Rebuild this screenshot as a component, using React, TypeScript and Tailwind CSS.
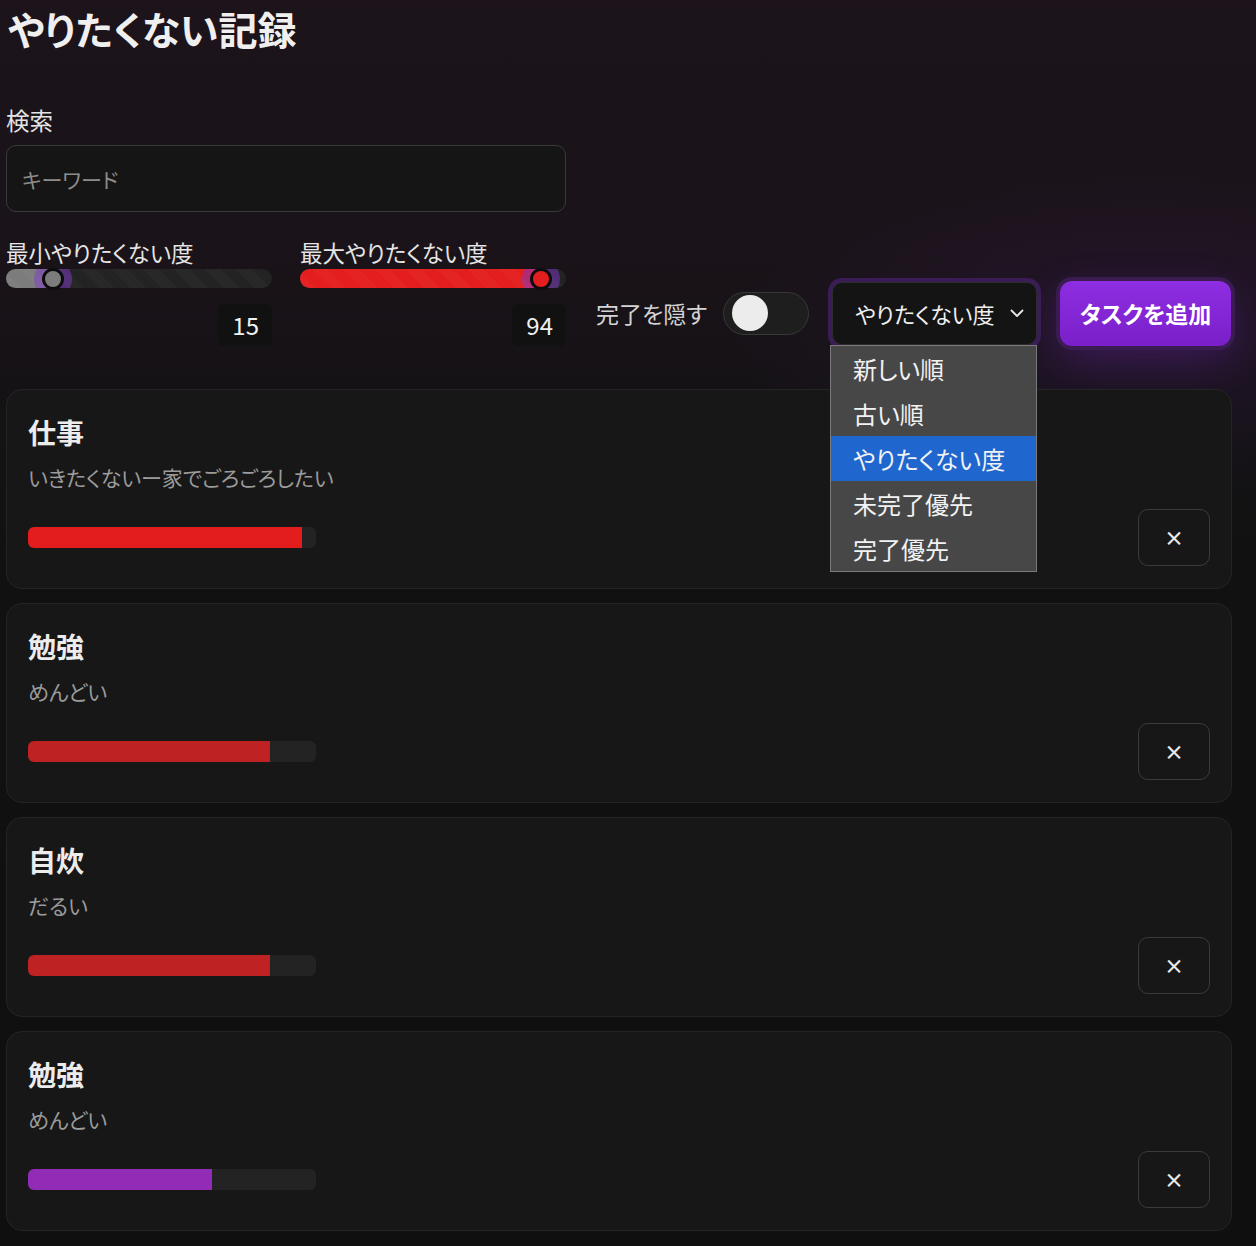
import React from "react";

type Task = { title: string; desc: string; value: number; color: string };

const tasks: Task[] = [
  { title: "仕事", desc: "いきたくないー家でごろごろしたい", value: 95, color: "#e31d1d" },
  { title: "勉強", desc: "めんどい", value: 84, color: "#bf2222" },
  { title: "自炊", desc: "だるい", value: 84, color: "#bf2222" },
  { title: "勉強", desc: "めんどい", value: 64, color: "#922bb5" },
];

function Slider({ label, value, fill }: { label: string; value: number; fill: string }) {
  const pos = 10 + (246 * value) / 100;
  return (
    <div className="flex w-[266px] flex-col">
      <div className="text-[22.5px] leading-[33px] text-[#e4e4e4]">{label}</div>
      <div className="relative h-[19px] w-full">
        <div className="absolute inset-0 overflow-hidden rounded-full bg-[#232323]">
          <div className="absolute inset-y-0 left-0" style={{ width: pos, background: fill }} />
          <div
            className="absolute top-1/2 h-[38px] w-[38px] -translate-x-1/2 -translate-y-1/2 rounded-full bg-[rgba(125,55,200,0.5)]"
            style={{ left: pos }}
          />
          <div className="absolute inset-0 [background-image:repeating-linear-gradient(45deg,rgba(255,255,255,0.025)_0px,rgba(255,255,255,0.025)_11px,transparent_11px,transparent_22px)]" />
        </div>
        <div
          className="absolute top-1/2 h-[22px] w-[22px] -translate-x-1/2 -translate-y-1/2 rounded-full border-[3px] border-[#0c0c0c]"
          style={{ left: pos, background: fill }}
        />
      </div>
      <div className="mt-[16px] h-[42px] w-[54px] self-end rounded-[6px] bg-[#111111] pr-[13px] text-right text-[24px] leading-[42px] text-[#f0f0f0]">
        {value}
      </div>
    </div>
  );
}

function TaskCard({ t }: { t: Task }) {
  return (
    <div className="flex h-[200px] flex-col rounded-[16px] border border-[#242424] bg-[#171717] pl-[21px] pr-[20px] pt-[21px]">
      <div className="text-[28px] font-bold leading-[42px] text-[#ececec]">{t.title}</div>
      <div className="mt-[8px] text-[21px] leading-[33px] text-[#9b9b9b]">{t.desc}</div>
      <div className="mt-[15px] flex items-center justify-between">
        <div className="h-[21px] w-[288px] overflow-hidden rounded-[6px] bg-[#232323]">
          <div className="h-full" style={{ width: `${t.value}%`, background: t.color }} />
        </div>
        <button className="mr-[1px] flex h-[57px] w-[72px] items-center justify-center rounded-[10px] border border-[#3b3b3b] bg-transparent text-[20px] font-bold text-[#e8e8e8]">
          ×
        </button>
      </div>
    </div>
  );
}

export default function App() {
  const options = ["新しい順", "古い順", "やりたくない度", "未完了優先", "完了優先"];
  return (
    <div className="min-h-screen w-full bg-[#101010] font-['Noto_Sans_CJK_JP','Noto_Sans',sans-serif] text-[#ececec] [background-image:radial-gradient(ellipse_420px_160px_at_1150px_330px,rgba(140,45,220,0.10),transparent),linear-gradient(180deg,#1c131b_0%,#1a1319_20%,#141215_34%,#111111_48%,#0f0f0f_100%)] [font-feature-settings:'palt']">
      <div className="pb-[15px] pl-[6px] pr-[24px]">
        <h1 className="pl-[2px] pt-[1px] text-[39px] font-bold leading-[54px] text-[#efefef]">やりたくない記録</h1>

        <div className="mt-[49px] text-[23.5px] leading-[33px] text-[#e4e4e4]">検索</div>
        <input
          className="mt-[8px] h-[67px] w-[560px] rounded-[10px] border border-[#3a3a3a] bg-[#151515] px-[15px] text-[21px] text-[#e8e8e8] outline-none placeholder:text-[#8c8c8c]"
          placeholder="キーワード"
        />

        <div className="mt-[24px] flex items-end">
          <Slider label="最小やりたくない度" value={15} fill="#7c7c7c" />
          <div className="ml-[28px]">
            <Slider label="最大やりたくない度" value={94} fill="#e41e1e" />
          </div>

          <div className="mb-[1px] ml-[30px] flex h-[64px] items-center">
            <span className="text-[23px] text-[#d4d4d4]">完了を隠す</span>
            <div className="ml-[16px] flex h-[43px] w-[86px] items-center rounded-full border border-[#383838] bg-[#1e1e1e] pl-[8px]">
              <div className="h-[36px] w-[36px] rounded-full bg-[#ececec]" />
            </div>

            <div className="relative ml-[23px]">
              <div className="flex h-[63px] w-[205px] items-center rounded-[10px] border border-[#2c2c2c] bg-[#141414] pl-[22px] pr-[12px] text-[22px] text-[#f0f0f0] shadow-[0_0_0_4px_#3a1c57]">
                <span className="flex-1">やりたくない度</span>
                <svg width="14" height="9" viewBox="0 0 14 9" fill="none">
                  <path d="M1.5 1.5L7 7L12.5 1.5" stroke="#e6e6e6" strokeWidth="1.8" strokeLinecap="round" strokeLinejoin="round" />
                </svg>
              </div>
              <div className="absolute left-[-2px] top-[63px] z-10 w-[207px] border border-[#7a7a7a] bg-[#474747]">
                {options.map((o) => (
                  <div
                    key={o}
                    className={`h-[45px] pl-[22px] text-[24px] leading-[45px] text-[#f2f2f2] ${o === "やりたくない度" ? "bg-[#1f66cf]" : ""}`}
                  >
                    {o}
                  </div>
                ))}
              </div>
            </div>

            <button className="ml-[23px] h-[65px] w-[171px] rounded-[12px] bg-gradient-to-b from-[#8e2de2] to-[#7a1fc9] text-[23px] font-bold text-white shadow-[0_0_0_4px_#3a1c52,0_14px_40px_rgba(138,43,226,0.25)]">
              タスクを追加
            </button>
          </div>
        </div>

        <div className="mt-[43px] flex flex-col gap-[14px]">
          {tasks.map((t, i) => (
            <TaskCard key={i} t={t} />
          ))}
        </div>
      </div>
    </div>
  );
}
